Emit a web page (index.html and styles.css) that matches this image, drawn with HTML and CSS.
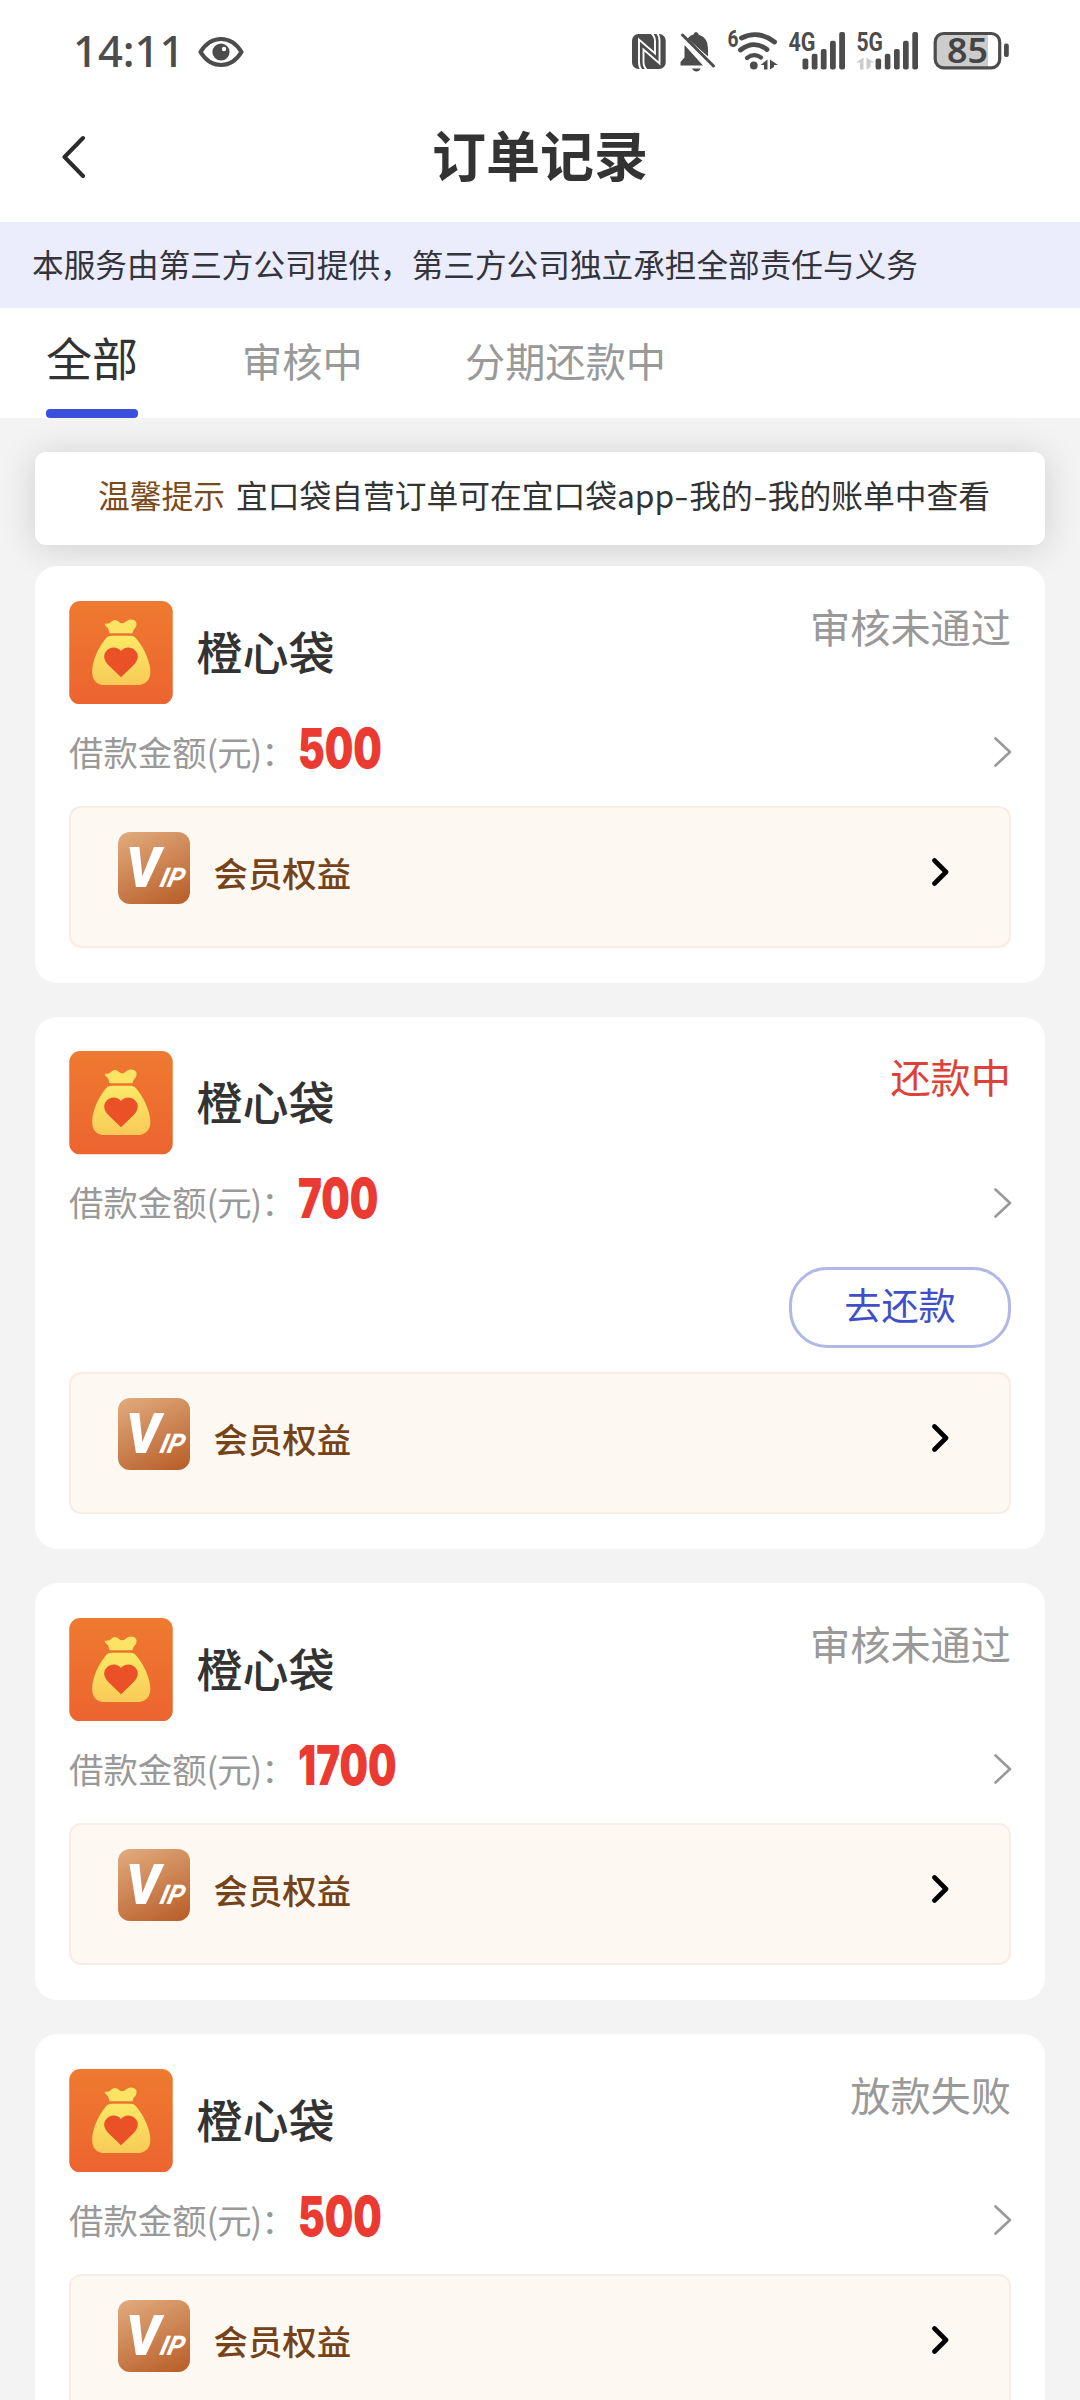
FILE: index.html
```html
<!DOCTYPE html>
<html lang="zh-CN">
<head>
<meta charset="utf-8">
<title>订单记录</title>
<link rel="stylesheet" href="styles.css">
</head>
<body>
<svg class="defs" width="0" height="0" aria-hidden="true">
  <defs>
    <linearGradient id="g-bg" x1="0" y1="0" x2="0" y2="1"><stop offset="0" stop-color="#ee7a30"/><stop offset="1" stop-color="#ec642f"/></linearGradient>
    <linearGradient id="g-bag" x1="0" y1="0" x2="0" y2="1"><stop offset="0" stop-color="#fbe965"/><stop offset="1" stop-color="#f8ca58"/></linearGradient>
  </defs>
  <symbol id="bag" viewBox="0 0 104 104">
    <rect width="104" height="104" rx="11" fill="url(#g-bg)"/>
    <path fill="#fbe464" d="M35.5 22.5Q40 23.500 42.500 20.500Q46.500 17.500 50 21Q53 24 57 20.500Q60.500 17.500 65 19.200Q69 21.500 67 26Q64.500 28 63.500 32.500H40.500Q40 28 38 26.500Q36 25 35.500 22.500Z"/>
    <path fill="url(#g-bag)" d="M43 35H61C65 35 67 37 69 40C76 49 81.500 62 81.500 71C81.500 80 76 84.500 68 84.500H36C28 84.500 23 80 23 71C23 62 28 49 35 40C37 37 39 35 43 35Z"/>
    <path fill="#ea5127" d="M52 76.500L39 64C34 59 34 53 38 49.500C42 45.500 49 46 52 50.500C55 46 62 45.500 66 49.500C70 53 70 59 65 64Z"/>
  </symbol>
  <symbol id="next" viewBox="0 0 18 30"><path d="M1.500 1.500L16 15L1.500 28.500" fill="none" stroke="#999" stroke-width="2.600" stroke-linecap="round" stroke-linejoin="round"/></symbol>
  <symbol id="next-bold" viewBox="0 0 17 28"><path d="M2.500 2.500L14 14L2.500 25.500" fill="none" stroke="#000" stroke-width="4.600" stroke-linecap="round" stroke-linejoin="round"/></symbol>
</svg>

<header class="status">
  <span class="time">14:11</span>
  <svg class="eye" width="46" height="32" viewBox="0 0 46 32"><path d="M2.500 16C8 7 15 3 23 3S38 7 43.500 16C38 25 31 29 23 29S8 25 2.500 16Z" fill="none" stroke="#4c4c4c" stroke-width="4.200" stroke-linejoin="round"/><circle cx="23" cy="16" r="8.600" fill="#4c4c4c"/><circle cx="26" cy="13" r="2.200" fill="#fff"/></svg>
  <svg class="indicators" width="400" height="50" viewBox="620 25 400 50">
    <g fill="#4c4c4c">
      <rect x="632" y="34" width="33.700" height="35" rx="6.500"/>
      <g fill="none" stroke="#fff" stroke-width="1.900"><path d="M641.500 70Q639 67 639 62V39.500L655 53.500V41Q655 36 651 33"/><path d="M657 33Q659.500 36 659.500 41V63.500L643.500 49.500V62Q643.500 67 647 70"/></g>
      <path d="M680.500 65.500V62L684.500 57.500V45L703 65.500ZM687.500 38.500Q690.500 35 693.500 34.500Q694 32 696 32T698.500 34.500Q708 38 708 48V56.500ZM692 68.500H700.500Q699.500 71.500 696.500 71.500T692 68.500Z"/>
      <path d="M682.500 35L713.500 66" fill="none" stroke="#4c4c4c" stroke-width="3" stroke-linecap="round"/>
      <g fill="none" stroke="#4c4c4c" stroke-width="4.800" stroke-linecap="round"><path d="M741.500 38Q758 29.500 774.500 42"/><path d="M740.500 50Q754 39.500 767 49.500"/><path d="M747 58Q754 52.500 761 57.500" stroke-width="4.200"/></g>
      <circle cx="753.800" cy="65.500" r="3.900"/>
      <path d="M760.500 65L767.500 59.500V69.500H764V65ZM770 59.500L778 65H774V67L770 69.500Z"/>
      <rect x="802.500" y="58.500" width="5.800" height="11" rx="2"/><rect x="811.700" y="53.700" width="5.800" height="15.800" rx="2"/><rect x="820.800" y="49" width="5.800" height="20.500" rx="2"/><rect x="830" y="40.800" width="5.800" height="28.700" rx="2"/><rect x="839.200" y="32" width="5.800" height="37.500" rx="2"/>
      <rect x="875.600" y="58.500" width="5.500" height="11" rx="2"/><rect x="884.800" y="53.700" width="5.600" height="15.800" rx="2"/><rect x="894" y="49" width="5.700" height="20.500" rx="2"/><rect x="903" y="40.800" width="5.700" height="28.700" rx="2"/><rect x="912.300" y="32" width="5.700" height="37.500" rx="2"/>
      <path fill="#cbcbcb" d="M856 62.500L863.500 57.500V69.500H860V62.500ZM866.500 57.500L874 62.500H870.500V67L866.500 69.500Z"/>
      <path fill="#ccc" d="M988 34H943Q935.500 34 935.500 42V60Q935.500 68 943 68H988Z"/>
      <rect x="935.200" y="33.500" width="64.500" height="34.300" rx="8.500" fill="none" stroke="#4c4c4c" stroke-width="3.200"/>
      <rect x="1004" y="43.500" width="4.800" height="13.500" rx="2"/>
      <text class="net" x="727.500" y="47" font-size="23" textLength="11" lengthAdjust="spacingAndGlyphs">6</text>
      <text class="net" x="788.500" y="50.500" font-size="25" textLength="27" lengthAdjust="spacingAndGlyphs">4G</text>
      <text class="net" x="856.500" y="50.500" font-size="25" textLength="26.500" lengthAdjust="spacingAndGlyphs">5G</text>
      <text class="bat" x="947" y="62.800" font-size="35" textLength="41" lengthAdjust="spacingAndGlyphs">85</text>
    </g>
  </svg>
</header>

<nav class="titlebar">
  <svg class="back" width="24" height="44" viewBox="0 0 24 44"><path d="M21 3L2.500 22L21 41" fill="none" stroke="#2b2b2b" stroke-width="4" stroke-linecap="round" stroke-linejoin="round"/></svg>
  <h1>订单记录</h1>
</nav>

<p class="banner">本服务由第三方公司提供，第三方公司独立承担全部责任与义务</p>

<div class="tabs">
  <span class="tab active">全部</span>
  <span class="tab">审核中</span>
  <span class="tab">分期还款中</span>
</div>

<main>
  <p class="notice"><span class="hint">温馨提示</span><span>宜口袋自营订单可在宜口袋app<span class="dash">-</span>我的<span class="dash">-</span>我的账单中查看</span></p>

  <section class="card">
    <div class="head"><svg class="logo"><use href="#bag"/></svg><h2>橙心袋</h2><span class="state">审核未通过</span></div>
    <div class="amount"><span class="label">借款金额<span class="unit">(元)</span>：</span><b class="num">500</b><svg class="next"><use href="#next"/></svg></div>
    <div class="vip"><span class="badge"><i class="v">V</i><i class="ip">IP</i></span><span class="vip-text">会员权益</span><svg class="go"><use href="#next-bold"/></svg></div>
  </section>

  <section class="card">
    <div class="head"><svg class="logo"><use href="#bag"/></svg><h2>橙心袋</h2><span class="state due">还款中</span></div>
    <div class="amount"><span class="label">借款金额<span class="unit">(元)</span>：</span><b class="num">700</b><svg class="next"><use href="#next"/></svg></div>
    <div class="actions"><button class="repay">去还款</button></div>
    <div class="vip"><span class="badge"><i class="v">V</i><i class="ip">IP</i></span><span class="vip-text">会员权益</span><svg class="go"><use href="#next-bold"/></svg></div>
  </section>

  <section class="card">
    <div class="head"><svg class="logo"><use href="#bag"/></svg><h2>橙心袋</h2><span class="state">审核未通过</span></div>
    <div class="amount"><span class="label">借款金额<span class="unit">(元)</span>：</span><b class="num">1700</b><svg class="next"><use href="#next"/></svg></div>
    <div class="vip"><span class="badge"><i class="v">V</i><i class="ip">IP</i></span><span class="vip-text">会员权益</span><svg class="go"><use href="#next-bold"/></svg></div>
  </section>

  <section class="card">
    <div class="head"><svg class="logo"><use href="#bag"/></svg><h2>橙心袋</h2><span class="state">放款失败</span></div>
    <div class="amount"><span class="label">借款金额<span class="unit">(元)</span>：</span><b class="num">500</b><svg class="next"><use href="#next"/></svg></div>
    <div class="vip"><span class="badge"><i class="v">V</i><i class="ip">IP</i></span><span class="vip-text">会员权益</span><svg class="go"><use href="#next-bold"/></svg></div>
  </section>
</main>
</body>
</html>
```
FILE: styles.css
```css
* { box-sizing: border-box; margin: 0; padding: 0; }
html, body { height: 2400px; overflow: hidden; }
body {
  width: 1080px;
  background: #f3f3f3;
  color: #333;
  font-family: "Noto Sans CJK SC", sans-serif;
}
.defs { position: absolute; }
svg { display: block; flex: none; }

.status {
  height: 100px;
  background: #fff;
  display: flex;
  align-items: flex-start;
  padding-left: 73px;
}
.time {
  width: 125px;
  margin-top: 20px;
  font: 540 43.5px/60px "Noto Sans", sans-serif;
  color: #4c4c4c;
}
.eye { margin-top: 36px; }
.indicators { margin: 25px 60px 0 auto; }
.net { font-family: Roboto, sans-serif; font-weight: 700; }
.bat { font-family: "Noto Sans", sans-serif; font-weight: 600; fill: #444; }

.titlebar {
  height: 122px;
  background: #fff;
  display: grid;
  grid-template-columns: 24px 1fr 24px;
  padding: 0 62px;
}
.back { margin-top: 35px; }
.titlebar h1 { font-size: 54px; line-height: 108px; font-weight: 700; text-align: center; }

.banner {
  height: 86px;
  padding-left: 32px;
  background: #ebedfc;
  font-size: 31.65px;
  line-height: 82px;
  color: #33343c;
  white-space: nowrap;
}

.tabs {
  position: relative;
  z-index: 1;
  height: 110px;
  padding-left: 46px;
  background: #fff;
  display: flex;
  align-items: flex-start;
}
.tab { height: 110px; font-size: 40.2px; line-height: 103px; color: #999; margin-right: 102.500px; }
.tab.active {
  display: flex;
  flex-direction: column;
  margin-right: 104px;
  font-size: 46px;
  line-height: 97px;
  color: #333;
}
.tab.active::after { content: ""; height: 9px; margin-top: 4px; border-radius: 4px; background: #3a50dc; }

main { padding: 34px 35px 0; display: flex; flex-direction: column; }
.notice {
  height: 93px;
  padding-left: 63px;
  display: flex;
  gap: 11px;
  border-radius: 11px;
  background: #fff;
  box-shadow: 0 3px 36px rgba(0, 0, 0, 0.15);
  font-size: 31.75px;
  line-height: 85px;
  white-space: nowrap;
  margin-bottom: 21.200px;
}
.hint { color: #7a4a1c; }
.dash { display: inline-block; width: 15px; text-align: center; transform: scaleX(1.3); }

.card {
  flex: none;
  position: relative;
  padding: 34.500px 34px 35px;
  margin-bottom: 34.300px;
  border-radius: 22px;
  background: #fff;
}
.head { height: 104px; display: flex; }
.logo { width: 104px; height: 103.500px; }
.head h2 { flex: 1; margin-left: 23.500px; font-size: 46px; line-height: 98px; font-weight: 500; }
.state { font-size: 40.2px; line-height: 49px; height: 49px; color: #999; }
.state.due { color: #dc4238; }

.amount { height: 101px; display: flex; align-items: flex-start; }
.label { width: 229px; font-size: 34.400px; line-height: 92px; color: #999; white-space: nowrap; }
.unit { letter-spacing: -1px; }
.num {
  font: 900 55px/86px Inter, sans-serif;
  color: #ea3a32;
  transform: scaleX(0.73);
  transform-origin: left;
}
.next { width: 18px; height: 30px; margin: 32.500px -1px 0 auto; }

.actions { height: 115.500px; display: flex; justify-content: flex-end; padding-top: 11px; }
.repay {
  width: 222px;
  height: 81px;
  border: 3px solid #b1b8e6;
  border-radius: 38px;
  background: #fff;
  font: 400 37.2px/66px "Noto Sans CJK SC", sans-serif;
  padding-bottom: 8px;
  color: #3f4fc9;
}

.vip {
  height: 142px;
  padding: 24px 60px 0 47px;
  border: 2px solid #f8ede4;
  border-radius: 12px;
  background: #fdf8f2;
  display: flex;
  align-items: flex-start;
}
.badge {
  width: 72px;
  height: 72px;
  padding: 17px 0 0 8px;
  display: flex;
  border-radius: 12px;
  background: linear-gradient(155deg, #e2ac7e, #b75c27);
  color: #fff;
}
.badge i { font-family: Roboto, sans-serif; font-style: italic; }
.v { width: 32px; font-size: 55px; font-weight: 900; line-height: 39px; transform: scaleX(0.98); transform-origin: left; }
.ip { font-size: 27px; font-weight: 800; line-height: 59px; transform: skewX(-14deg) scaleX(0.95); transform-origin: left 75%; }
.vip-text { margin-left: 23.500px; font-size: 34.400px; line-height: 81px; font-weight: 500; color: #75431a; }
.go { width: 17px; height: 28px; margin: 26px 0 0 auto; }
```
